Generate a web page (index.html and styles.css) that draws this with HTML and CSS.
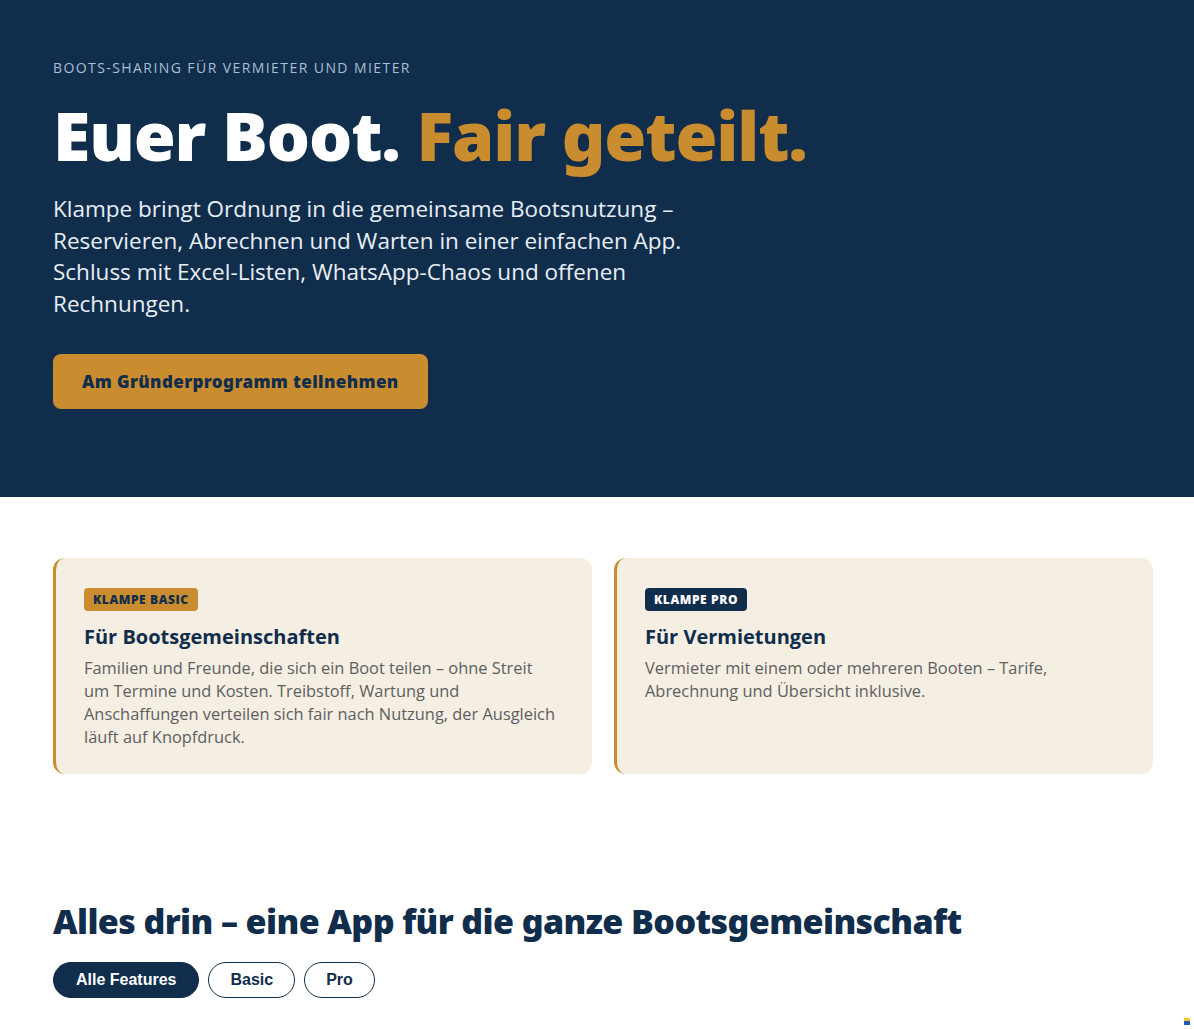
FILE: index.html
```html
<!DOCTYPE html>
<html lang="de">
<head>
<meta charset="utf-8">
<title>Klampe – Boots-Sharing</title>
<link rel="stylesheet" href="styles.css">
</head>
<body>
<header class="hero">
  <div class="container">
    <p class="eyebrow">BOOTS-SHARING FÜR VERMIETER UND MIETER</p>
    <h1 class="hero-title">Euer Boot. <span class="accent">Fair geteilt.</span></h1>
    <p class="hero-text">Klampe bringt Ordnung in die gemeinsame Bootsnutzung – Reservieren, Abrechnen und Warten in einer einfachen App. Schluss mit Excel-Listen, WhatsApp-Chaos und offenen Rechnungen.</p>
    <a class="cta" href="#">Am Gründerprogramm teilnehmen</a>
  </div>
</header>
<section class="plans">
  <div class="container plan-grid">
    <article class="plan">
      <span class="badge badge-basic">KLAMPE BASIC</span>
      <h3 class="plan-title">Für Bootsgemeinschaften</h3>
      <p class="plan-text">Familien und Freunde, die sich ein Boot teilen – ohne Streit um Termine und Kosten. Treibstoff, Wartung und Anschaffungen verteilen sich fair nach Nutzung, der Ausgleich läuft auf Knopfdruck.</p>
    </article>
    <article class="plan">
      <span class="badge badge-pro">KLAMPE PRO</span>
      <h3 class="plan-title">Für Vermietungen</h3>
      <p class="plan-text">Vermieter mit einem oder mehreren Booten – Tarife, Abrechnung und Übersicht inklusive.</p>
    </article>
  </div>
</section>
<section class="features">
  <div class="container">
    <h2 class="features-title">Alles drin – eine App für die ganze Bootsgemeinschaft</h2>
    <div class="filters">
      <button class="pill pill-active">Alle Features</button>
      <button class="pill">Basic</button>
      <button class="pill">Pro</button>
    </div>
  </div>
</section>
<div class="flag" aria-hidden="true"><span class="flag-top"></span><span class="flag-bottom"></span></div>
</body>
</html>
```
FILE: styles.css
```css
* { box-sizing: border-box; }
html, body { margin: 0; padding: 0; }
body {
  font-family: "Open Sans", "Noto Sans", sans-serif;
  background: #ffffff;
  color: #102d4b;
}
.container {
  width: 1100px;
  margin-left: 53px;
}
.hero {
  background: #102d4b;
  height: 497px;
  padding-top: 59px;
}
.eyebrow {
  margin: 0;
  font-size: 14px;
  letter-spacing: 1.42px;
  color: #a8bfd6;
  line-height: 18px;
}
.hero-title {
  margin: 18px 0 0;
  font-family: "Noto Sans", sans-serif;
  font-weight: 900;
  font-size: 68px;
  line-height: 80px;
  color: #ffffff;
  letter-spacing: -1.1px;
}
.accent { color: #c98c2e; }
.hero-text {
  margin: 18px 0 0;
  max-width: 660px;
  font-size: 22.5px;
  line-height: 31.7px;
  color: #e8eef5;
}
.cta {
  display: inline-flex;
  align-items: center;
  margin-top: 34px;
  height: 55px;
  padding: 0 29px;
  border-radius: 8px;
  background: #c98c2e;
  color: #102d4b;
  text-decoration: none;
  font-family: "Noto Sans", sans-serif;
  font-weight: 900;
  font-size: 17px;
  letter-spacing: 0.4px;
}
.plans { padding-top: 61px; }
.plan-grid {
  display: grid;
  grid-template-columns: 1fr 1fr;
  gap: 22px;
}
.plan {
  background: #f4eee3;
  border-left: 3px solid #c98c2e;
  border-radius: 12px;
  padding: 29px 36px 26px 28px;
}
.badge {
  display: inline-block;
  height: 23px;
  line-height: 23px;
  padding: 0 9px;
  border-radius: 4px;
  font-size: 12px;
  font-weight: 800;
  letter-spacing: 0.6px;
}
.badge-basic { background: #c98c2e; color: #102d4b; }
.badge-pro { background: #102d4b; color: #ffffff; }
.plan-title {
  margin: 12px 0 0;
  font-size: 20px;
  font-weight: 700;
  line-height: 28px;
  color: #102d4b;
}
.plan-text {
  margin: 5px 0 0;
  font-size: 16.4px;
  line-height: 23px;
  color: #5f5f5f;
  font-weight: 400;
}
.features { padding-top: 125px; }
.features-title {
  margin: 0;
  font-family: "Noto Sans", sans-serif;
  font-weight: 900;
  font-size: 34px;
  line-height: 44px;
  color: #102d4b;
  letter-spacing: -0.6px;
}
.filters {
  display: flex;
  gap: 9px;
  margin-top: 19px;
}
.pill {
  height: 36px;
  padding: 0 21px;
  border: 1px solid #102d4b;
  border-radius: 18px;
  background: #ffffff;
  color: #102d4b;
  font-family: "Liberation Sans", Arial, sans-serif;
  font-weight: 700;
  font-size: 16px;
}
.pill-active { background: #102d4b; color: #ffffff; padding: 0 22px; }
.flag {
  position: fixed;
  right: 4px;
  bottom: 4px;
  width: 6px;
  display: flex;
  flex-direction: column;
}
.flag-top { height: 3px; background: #f2c230; }
.flag-bottom { height: 4px; background: #1e5bb8; }
```
